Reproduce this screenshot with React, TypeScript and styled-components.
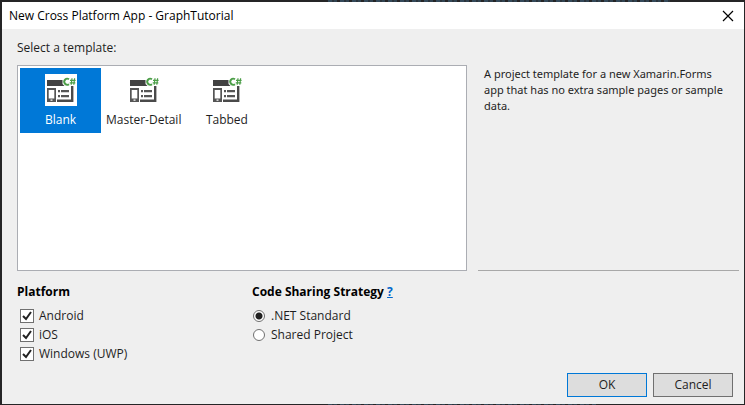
import React, { useState } from "react";
import styled, { createGlobalStyle } from "styled-components";

const GlobalStyle = createGlobalStyle`
  *, *::before, *::after { box-sizing: border-box; }
  body {
    margin: 0;
    background: #252526;
    color: #1e1e1e;
    font-family: "Open Sans", "Noto Sans", sans-serif;
    font-size: 12px;
    line-height: 16px;
  }
`;

const Backdrop = styled.div`
  min-height: 100vh;
  display: flex;
  flex-direction: column;
  padding: 0 1px 0 2px;
`;

const CodeStrip = styled.div<{ $height: number; $width: string }>`
  height: ${(p) => p.$height}px;
  width: ${(p) => p.$width};
  margin-left: 44%;
  background: repeating-linear-gradient(90deg, #34495a 0 4px, #2b343b 4px 6px, #304250 6px 9px, #252526 9px 12px);
`;

const Dialog = styled.section`
  flex: 1;
  display: flex;
  flex-direction: column;
  background: #efefef;
`;

const TitleBar = styled.header`
  height: 27px;
  display: flex;
  align-items: center;
  justify-content: space-between;
  padding: 0 9px 0 7px;
  background: #fff;
`;

const Title = styled.h1`
  margin: 0;
  font-size: 12px;
  font-weight: 400;
  color: #000;
`;

const CloseButton = styled.button`
  display: flex;
  padding: 1px;
  border: 0;
  background: none;
`;

const Content = styled.main`
  flex: 1;
  display: flex;
  flex-direction: column;
  padding: 11px 5px 7px 15px;
`;

const Label = styled.h2`
  margin: 0 0 9px;
  font-size: 12px;
  font-weight: 400;
`;

const TemplateArea = styled.div`
  flex: 1;
  display: grid;
  grid-template-columns: 450fr 261fr;
  gap: 11px;
`;

const TemplateList = styled.div`
  display: flex;
  align-items: flex-start;
  padding: 2px;
  border: 1px solid #abadb3;
  background: #fff;
`;

const TemplateItem = styled.button<{ $selected: boolean }>`
  display: flex;
  flex-direction: column;
  align-items: center;
  gap: 6px;
  min-width: 81px;
  padding: 6px 5px 5px;
  border: 0;
  background: ${(p) => (p.$selected ? "#0078d7" : "transparent")};
  color: ${(p) => (p.$selected ? "#fff" : "#1e1e1e")};
  font: inherit;
  white-space: nowrap;
`;

const IconTile = styled.span`
  display: flex;
  background: #fff;
`;

const Description = styled.p`
  margin: 0;
  padding: 1px 6px;
  border-bottom: 1px solid #a8a8a8;
  font-family: "Noto Sans", "Open Sans", sans-serif;
  font-size: 11px;
`;

const Options = styled.div`
  display: flex;
  padding-top: 13px;
`;

const OptionGroup = styled.fieldset<{ $width: string }>`
  display: flex;
  flex-direction: column;
  gap: 3px;
  width: ${(p) => p.$width};
  margin: 0;
  padding: 0;
  border: 0;
`;

const Legend = styled.legend`
  padding: 0 0 8px;
  font-weight: 700;
  color: #000;
`;

const HelpLink = styled.a`
  color: #0066cc;
`;

const Choice = styled.label<{ $indent: number; $gap: number }>`
  display: flex;
  align-items: center;
  gap: ${(p) => p.$gap}px;
  padding-left: ${(p) => p.$indent}px;
`;

const CheckInput = styled.input`
  appearance: none;
  width: 14px;
  height: 14px;
  margin: 0;
  border: 1px solid #707070;
  background: #fff;
  &:checked {
    background: #fff url("data:image/svg+xml,%3Csvg xmlns='http://www.w3.org/2000/svg' viewBox='0 0 12 12'%3E%3Cpath d='M2 6l3 3 5-7' fill='none' stroke='%23212121' stroke-width='2'/%3E%3C/svg%3E") center / 12px;
  }
`;

const RadioInput = styled.input`
  appearance: none;
  width: 12px;
  height: 12px;
  margin: 0;
  border: 1px solid #707070;
  border-radius: 50%;
  background: #fff;
  &:checked {
    background: radial-gradient(circle, #212121 0 3px, #fff 4px);
  }
`;

const Actions = styled.footer`
  display: flex;
  justify-content: flex-end;
  gap: 6px;
  padding: 11px 6px 0 0;
`;

const ActionButton = styled.button<{ $primary?: boolean }>`
  width: 80px;
  height: 24px;
  padding: 0;
  border: 1px solid ${(p) => (p.$primary ? "#0078d7" : "#707070")};
  background: #ddd;
  color: #1e1e1e;
  font: inherit;
`;

function TemplateIcon() {
  return (
    <svg width="32" height="32" viewBox="0 0 32 32" aria-hidden="true">
      <path d="M2 6h15.5v4l2 2H2z" fill="#424242" />
      <path d="M26 12h2.4v16H12v-2.4h14z" fill="#4a4a4a" />
      <path d="M2 14h9v14H2zm1.7 2v8.6h5.6V16zm1.8 9.6v1.2h2v-1.2z" fill="#555" fillRule="evenodd" />
      <path d="M13 16h2v2.2h-2zm3 0h8v2.2h-8zM13 21h2v2.2h-2zm3 0h8v2.2h-8z" fill="#555" />
      <path d="M24 5.3A3 3 0 1 0 24 10.2" fill="none" stroke="#4c9e48" strokeWidth="1.9" />
      <path d="M25 6.3h5.6M24.7 8.8h5.6M27 4.2l-.8 6.6M29.6 4.2l-.8 6.6" stroke="#4c9e48" strokeWidth="1.2" />
    </svg>
  );
}

const templates = ["Blank", "Master-Detail", "Tabbed"];
const platforms = ["Android", "iOS", "Windows (UWP)"];
const strategies = [".NET Standard", "Shared Project"];

export default function App() {
  const [selected, setSelected] = useState("Blank");
  return (
    <Backdrop>
      <GlobalStyle />
      <CodeStrip $height={2} $width="46%" />
      <Dialog role="dialog" aria-labelledby="dialog-title">
        <TitleBar>
          <Title id="dialog-title">New Cross Platform App - GraphTutorial</Title>
          <CloseButton aria-label="Close">
            <svg width="12" height="12" viewBox="0 0 12 12">
              <path d="M1 1l10 10M11 1L1 11" stroke="#000" strokeWidth="1.2" />
            </svg>
          </CloseButton>
        </TitleBar>
        <Content>
          <Label>Select a template:</Label>
          <TemplateArea>
            <TemplateList>
              {templates.map((name) => (
                <TemplateItem
                  key={name}
                  $selected={name === selected}
                  aria-pressed={name === selected}
                  onClick={() => setSelected(name)}
                >
                  <IconTile>
                    <TemplateIcon />
                  </IconTile>
                  {name}
                </TemplateItem>
              ))}
            </TemplateList>
            <Description>
              A project template for a new Xamarin.Forms app that has no extra sample pages or sample data.
            </Description>
          </TemplateArea>
          <Options>
            <OptionGroup $width="235px">
              <Legend>Platform</Legend>
              {platforms.map((name) => (
                <Choice key={name} $indent={3} $gap={5}>
                  <CheckInput type="checkbox" defaultChecked />
                  {name}
                </Choice>
              ))}
            </OptionGroup>
            <OptionGroup $width="auto">
              <Legend>
                Code Sharing Strategy <HelpLink href="#help">?</HelpLink>
              </Legend>
              {strategies.map((name, i) => (
                <Choice key={name} $indent={1} $gap={6}>
                  <RadioInput type="radio" name="strategy" defaultChecked={i === 0} />
                  {name}
                </Choice>
              ))}
            </OptionGroup>
          </Options>
          <Actions>
            <ActionButton $primary>OK</ActionButton>
            <ActionButton>Cancel</ActionButton>
          </Actions>
        </Content>
      </Dialog>
      <CodeStrip $height={1} $width="36%" />
    </Backdrop>
  );
}
